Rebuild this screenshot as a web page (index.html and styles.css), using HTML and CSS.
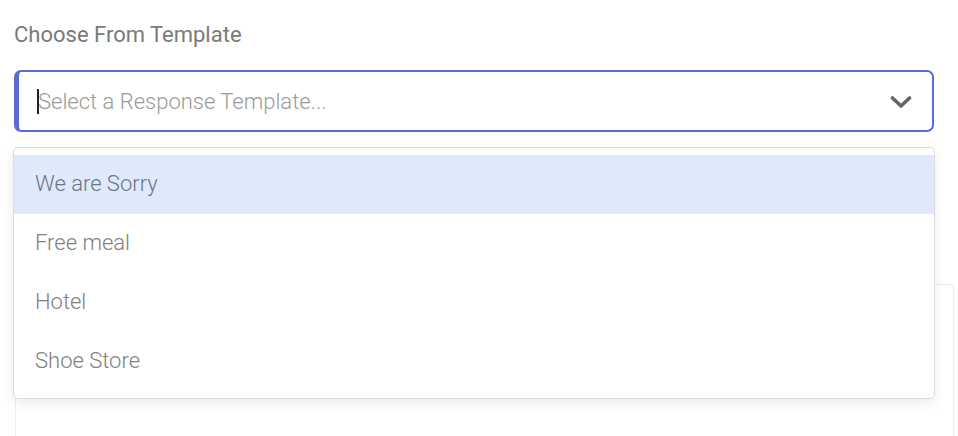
FILE: index.html
```html
<!DOCTYPE html>
<html>
<head>
<meta charset="utf-8">
<link rel="stylesheet" href="styles.css">
</head>
<body>
<div class="page">
  <div class="label">Choose From Template</div>
  <div class="select-wrap">
    <div class="select">
      <span class="caret"></span>
      <span class="placeholder">Select a Response Template...</span>
      <svg class="chevron" width="22" height="14" viewBox="0 0 22 14"><path d="M2.5 3 L11 11 L19.5 3" fill="none" stroke="#666" stroke-width="3.6" stroke-linecap="round" stroke-linejoin="round"/></svg>
    </div>
    <ul class="menu">
      <li class="item active">We are Sorry</li>
      <li class="item">Free meal</li>
      <li class="item">Hotel</li>
      <li class="item">Shoe Store</li>
    </ul>
  </div>
  <div class="panel"></div>
</div>
</body>
</html>
```

FILE: styles.css
```css
html, body {
  margin: 0;
  padding: 0;
  background: #fff;
}
.page {
  box-sizing: border-box;
  height: 436px;
  overflow: hidden;
  padding: 22px 0 0 14px;
  font-family: Roboto, "Liberation Sans", sans-serif;
}
.label {
  font-size: 22px;
  line-height: 26px;
  color: #7a7a7a;
  font-weight: 400;
}
.select-wrap {
  position: relative;
  margin-top: 22px;
  width: 920px;
}
.select {
  box-sizing: border-box;
  height: 62px;
  border: 2px solid #5a6ad9;
  border-left-width: 5px;
  border-radius: 7px;
  display: flex;
  align-items: center;
  padding-left: 18px;
  padding-right: 20px;
}
.caret {
  width: 2px;
  height: 25px;
  background: #222;
}
.placeholder {
  flex: 1;
  font-size: 22px;
  font-weight: 300;
  color: #9a9a9a;
  margin-left: -1px;
}
.chevron {
  display: block;
  margin-top: 2px;
}
.menu {
  position: absolute;
  top: 77px;
  left: -1px;
  width: 922px;
  box-sizing: border-box;
  margin: 0;
  padding: 7px 0;
  list-style: none;
  background: #fff;
  border: 1px solid #dcdcdc;
  border-radius: 5px;
  box-shadow: 0 4px 12px rgba(0,0,0,0.08);
  z-index: 2;
}
.item {
  height: 59px;
  display: flex;
  align-items: center;
  padding-left: 21px;
  padding-bottom: 2px;
  box-sizing: border-box;
  font-size: 22px;
  font-weight: 300;
  color: #808080;
}
.item.active {
  background: #deeafc;
  color: #6e7582;
}
.panel {
  margin-top: 152px;
  margin-left: 1px;
  width: 939px;
  height: 200px;
  box-sizing: border-box;
  border: 1px solid #ececec;
  border-radius: 4px;
}
```
